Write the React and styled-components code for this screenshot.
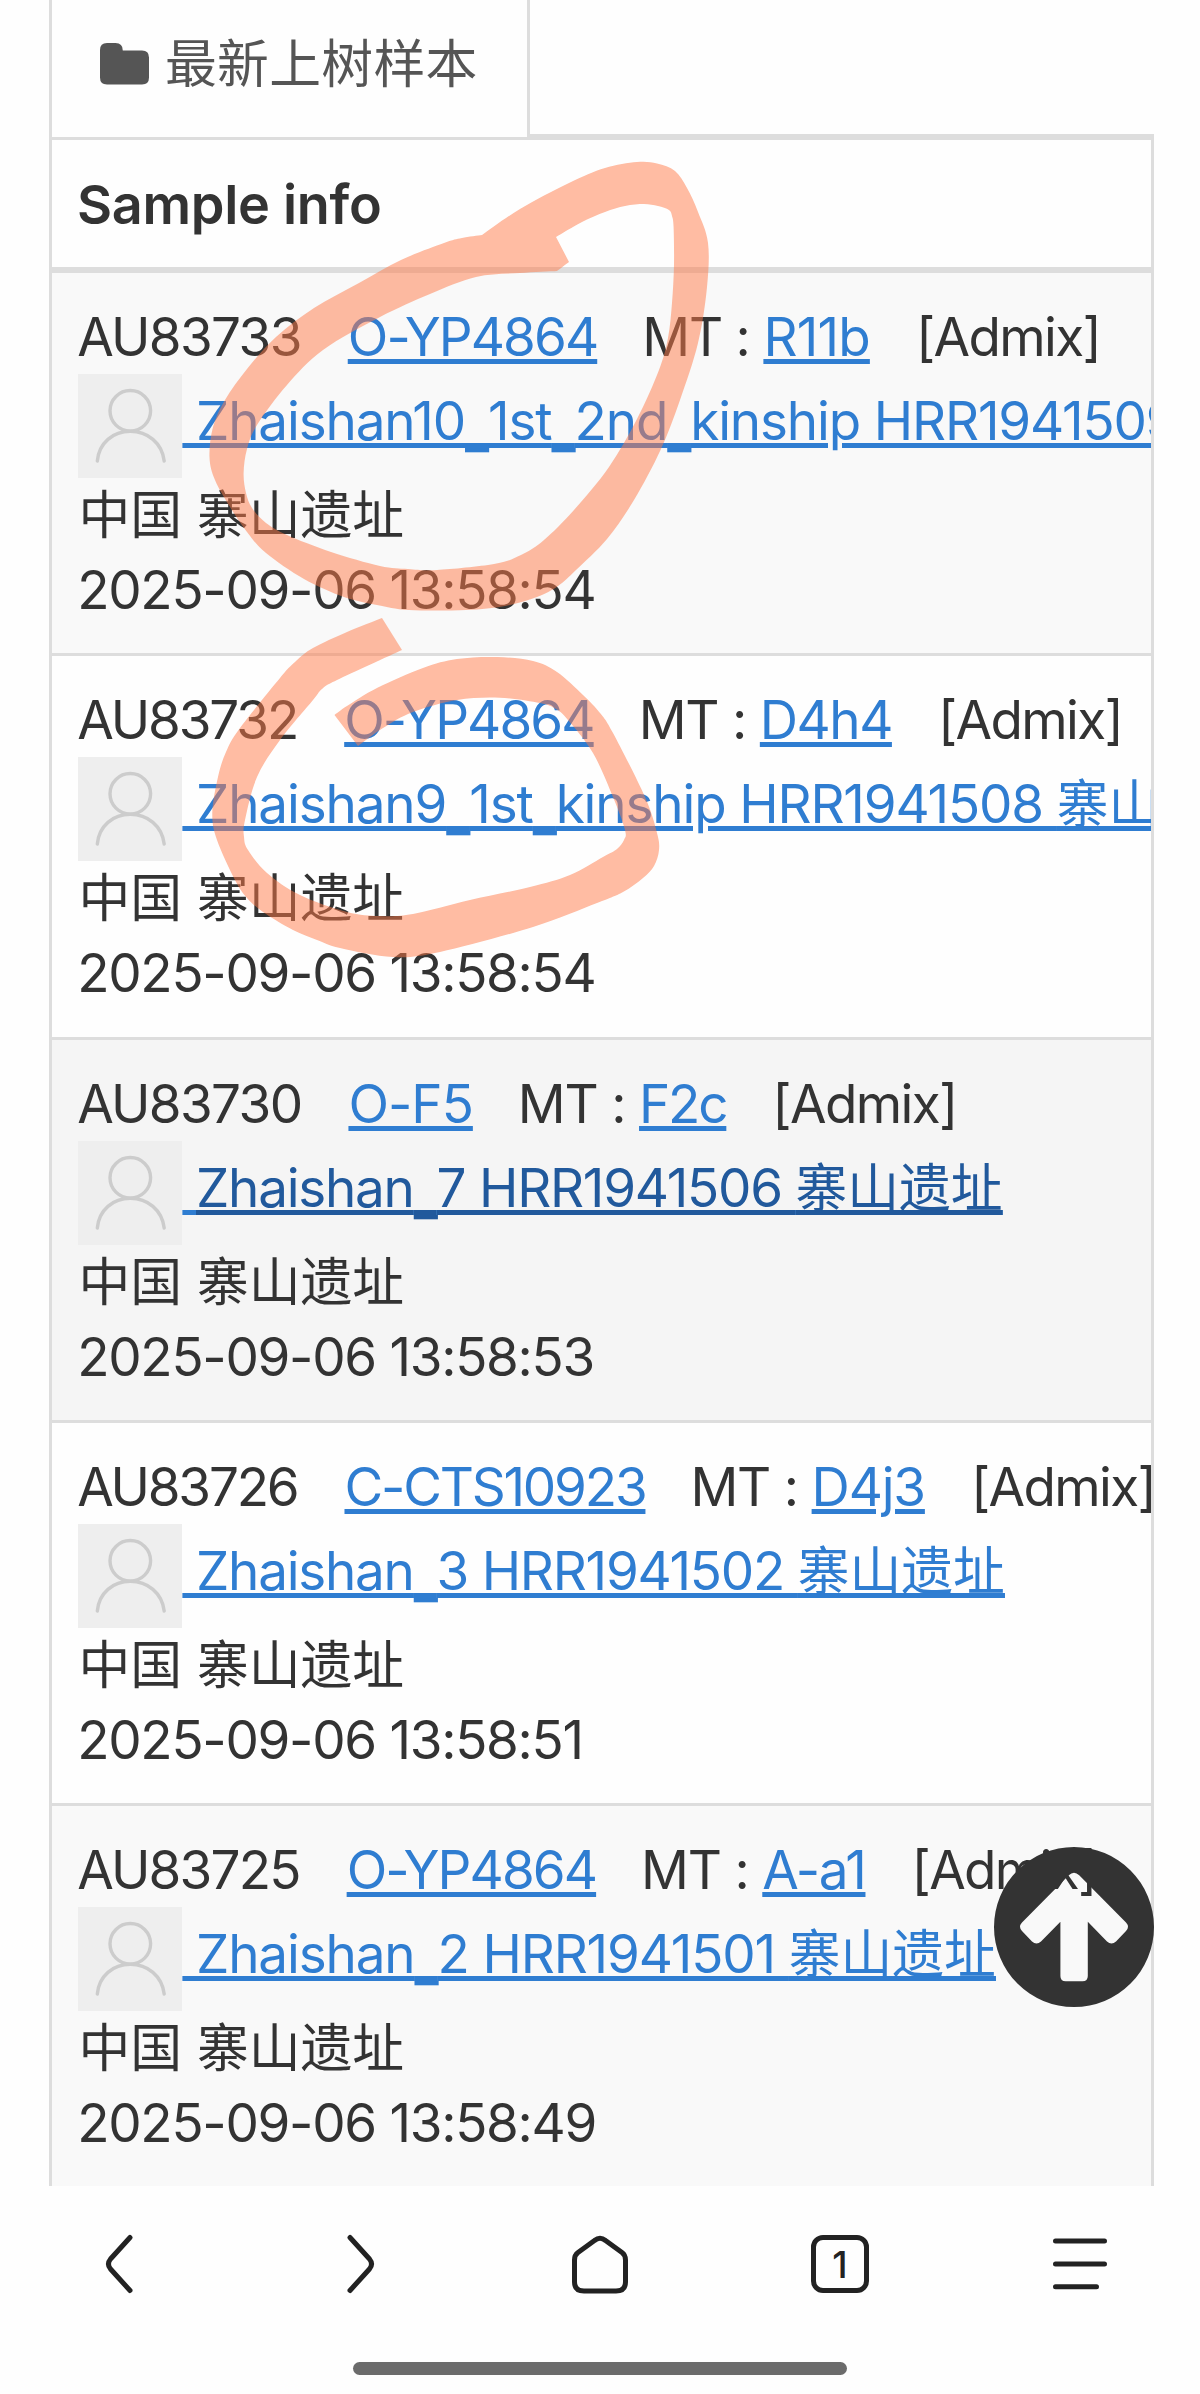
import React from "react";
import styled, { createGlobalStyle } from "styled-components";

const GlobalStyle = createGlobalStyle`
  * {
    box-sizing: border-box;
  }
  body {
    margin: 0;
    background: #fefefe;
    color: #333;
    font-family: "Inter", "Noto Sans CJK SC", sans-serif;
    font-size: 53px;
  }
`;

const Page = styled.div`
  position: relative;
  width: 1200px;
  height: 2394px;
  display: flex;
  flex-direction: column;
  overflow: hidden;
`;

const Content = styled.main`
  height: 2186px;
  padding: 0 46px 0 49px;
  overflow: hidden;
`;

const TabBar = styled.div`
  display: flex;
  height: 137px;
  border-bottom: 3px solid #ddd;
`;

const Tab = styled.div`
  display: flex;
  align-items: center;
  gap: 15px;
  width: 481px;
  height: 137px;
  padding: 0 0 9px 48px;
  border: solid #ddd;
  border-width: 0 3px;
  background: #fefefe;
  color: #555;
  font-size: 51.8px;
  line-height: 74px;
  letter-spacing: 0.3px;
  white-space: nowrap;
`;

const Table = styled.section`
  border: 3px solid #ddd;
  border-bottom: 0;
  overflow: hidden;
`;

const TableHead = styled.header`
  height: 133px;
  padding: 1px 0 0 25px;
  border-bottom: 6px solid #ddd;
  font-size: 54px;
  font-weight: 600;
  line-height: 127px;
  letter-spacing: -0.3px;
`;

const Sample = styled.article`
  height: 383.3px;
  padding: 28px 0 0 26.4px;
  border-bottom: 3px solid #ddd;
  background: ${({ $bg }) => $bg};
  white-space: pre;
`;

const Tags = styled.div`
  display: flex;
  height: 73px;
  margin-left: -1.2px;
  line-height: 73px;
`;

const Piece = styled.span`
  flex: none;
  letter-spacing: ${({ $track = -1.65 }) => $track}px;
  margin-right: ${({ $gap = 47 }) => $gap}px;
`;

const Link = styled.a`
  color: #2f7dd1;
  text-decoration: underline;
  text-decoration-thickness: 5px;
  text-underline-offset: 3px;
`;

const TagLink = styled(Link)`
  flex: none;
  letter-spacing: ${({ $track = -1.9 }) => $track}px;
  margin-right: ${({ $gap = 45 }) => $gap}px;
`;

const NameLine = styled.div`
  display: flex;
  height: 104px;
`;

const Picture = styled.svg`
  flex: none;
  width: 104px;
  height: 104px;
`;

const NameLink = styled(Link)`
  padding-top: 11px;
  line-height: 73px;
  letter-spacing: -1.3px;
`;

const NameText = styled.span`
  color: ${({ $active }) => ($active ? "#21599c" : "#2f7dd1")};
  letter-spacing: ${({ $track }) => $track}px;
  text-decoration: inherit;
`;

const Underscore = styled.span`
  line-height: 1;
  vertical-align: -8px;
  text-decoration-skip-ink: none;
`;

const Cjk = styled.span`
  font-size: 51.8px;
  letter-spacing: 0;
`;

const Place = styled.div`
  height: 75.2px;
  line-height: 74.6px;
`;

const Time = styled(Place)`
  margin-left: -1.2px;
  letter-spacing: -1.3px;
`;

const samples = [
  {
    id: "AU83733",
    y: "O-YP4864",
    mt: "R11b",
    mtTrack: -0.8,
    name: "Zhaishan10_1st_2nd_kinship HRR1941509 ",
    nameTrack: -1.15,
    time: "2025-09-06 13:58:54",
    bg: "#f9f9f9",
  },
  {
    id: "AU83732",
    idTrack: -2.1,
    y: "O-YP4864",
    mt: "D4h4",
    mtTrack: -1.5,
    name: "Zhaishan9_1st_kinship HRR1941508 ",
    nameTrack: -1.15,
    time: "2025-09-06 13:58:54",
    bg: "#fefefe",
  },
  {
    id: "AU83730",
    y: "O-F5",
    yTrack: -1,
    mt: "F2c",
    mtTrack: -2.2,
    name: "Zhaishan_7 HRR1941506 ",
    nameTrack: -1.25,
    time: "2025-09-06 13:58:53",
    bg: "#f5f5f5",
    active: true,
  },
  {
    id: "AU83726",
    idTrack: -2.2,
    y: "C-CTS10923",
    yTrack: -2.2,
    mt: "D4j3",
    mtTrack: -1.2,
    name: "Zhaishan_3 HRR1941502 ",
    nameTrack: -1.25,
    time: "2025-09-06 13:58:51",
    bg: "#fefefe",
  },
  {
    id: "AU83725",
    idTrack: -1.8,
    y: "O-YP4864",
    mt: "A-a1",
    mtTrack: -1.3,
    name: "Zhaishan_2 HRR1941501 ",
    nameTrack: -1.15,
    time: "2025-09-06 13:58:49",
    bg: "#f9f9f9",
  },
];

const place = "寨山遗址";

const Avatar = () => (
  <Picture viewBox="0 0 104 104">
    <rect width="104" height="104" fill="#eee" />
    <g fill="none" stroke="#ccc" strokeWidth="3.4" strokeLinecap="round">
      <circle cx="52.3" cy="36.8" r="20.3" />
      <path d="M19.3 87C21 69 35 57.3 52.3 57.3S84 69 86.2 87" />
    </g>
  </Picture>
);

const SampleRow = ({ sample }) => {
  const { id, idTrack, y, yTrack, mt, mtTrack, name, nameTrack, time, bg, active } = sample;

  return (
    <Sample $bg={bg}>
      <Tags>
        <Piece $track={idTrack}>{id}</Piece>
        <TagLink $track={yTrack}>{y}</TagLink>
        <Piece $track={-1.2} $gap={0}>
          {"MT : "}
        </Piece>
        <TagLink $track={mtTrack} $gap={46}>
          {mt}
        </TagLink>
        <Piece>[Admix]</Piece>
      </Tags>
      <NameLine>
        <Avatar />
        <NameLink>
          {" "}
          <NameText $active={active} $track={nameTrack}>
            {name.split("_").map((part, i) => (
              <React.Fragment key={i}>
                {i > 0 && <Underscore>_</Underscore>}
                {part}
              </React.Fragment>
            ))}
            <Cjk>{place}</Cjk>
          </NameText>
        </NameLink>
      </NameLine>
      <Place>
        <Cjk>中国</Cjk> <Cjk>{place}</Cjk>
      </Place>
      <Time>{time}</Time>
    </Sample>
  );
};

const UpButton = styled.svg`
  position: absolute;
  left: 994px;
  top: 1847px;
`;

const Marks = styled.svg`
  position: absolute;
  inset: 0;
  pointer-events: none;
`;

// Catmull-Rom through every point of an open run
const curve = (pts) =>
  pts
    .slice(1)
    .map((p, i) => {
      const a = pts[i - 1] || pts[i];
      const b = pts[i];
      const d = pts[i + 2] || p;
      return `C${b[0] + (p[0] - a[0]) / 6} ${b[1] + (p[1] - a[1]) / 6} ${
        p[0] - (d[0] - b[0]) / 6
      } ${p[1] - (d[1] - b[1]) / 6} ${p[0]} ${p[1]}`;
    })
    .join("");

// runs are joined by sharp corners
const shape = (...runs) =>
  `M${runs[0][0].join(" ")}` +
  runs.map((r, i) => (i ? `L${r[0].join(" ")}` : "") + curve(r)).join("") +
  "Z";

const firstOuter = [
  [482, 235], [520, 209], [569, 183], [605, 168], [637, 162], [657, 163.5],
  [675, 171], [687, 188], [698, 212], [708, 243], [707, 287], [698, 343],
  [680, 400], [661, 449], [634, 500], [607, 539], [576, 570], [558, 586],
  [537, 597], [505, 606], [466, 610], [409, 610], [377, 605], [344, 597],
  [304, 579], [266, 553], [247, 532], [230, 507], [215, 480], [209.5, 457],
  [213, 427], [225, 400], [247, 369], [276, 337], [314, 308], [359, 283],
  [401, 260], [444, 243], [462, 238], [482, 235],
];

const firstInner = [
  [557, 271], [520, 273], [476, 277], [430, 294], [380, 317], [323, 350],
  [287, 385], [257, 425], [247, 449], [243.6, 473], [246, 493], [252, 508],
  [266, 523], [287, 535], [331, 552], [380, 566], [408, 569], [437, 570],
  [494, 564], [521, 555], [544, 540], [574, 510], [609, 467], [637, 419],
  [659, 370], [668, 338], [672, 303], [674, 265], [673.6, 227], [672, 216],
  [669, 210], [658, 206], [644, 204], [625, 206], [605, 212], [582, 222],
  [556, 237],
];

const firstTail = [[569, 262], [557, 271]];

const secondOuter = [
  [382, 618], [347, 632], [313, 648], [296, 661], [280, 678], [240, 728],
  [226, 752], [218, 777], [212.3, 813], [217, 840], [235, 880], [247, 898],
  [263, 912], [293, 930], [317, 940], [340, 948], [393, 957], [440, 952],
  [533, 927], [597, 903], [623, 892], [643, 878], [654, 866], [659, 850],
  [657, 833], [645, 797], [613, 733], [600, 713], [583, 695], [557, 672],
  [533, 661], [497, 657], [457, 659], [423, 668], [377, 688], [347, 706],
  [334.5, 715],
];

const secondInner = [
  [358, 746], [383, 728], [413, 712], [457, 700], [500, 697.7], [540, 703],
  [556, 709], [568, 720], [593, 753], [613, 797], [625, 830], [624, 840],
  [617, 849], [603, 857], [570, 875], [530, 887], [470, 900], [413, 914],
  [380, 916], [347, 912], [300, 895], [267, 873], [248, 850], [244, 837],
  [245, 820], [257, 777], [280, 740], [313, 700], [322, 689], [337, 680],
  [402, 650],
];

const Toolbar = styled.nav`
  display: grid;
  grid-template-columns: repeat(5, 240px);
  justify-items: center;
  align-items: center;
  height: 156px;
`;

const Icon = styled.svg`
  width: 64px;
  height: 64px;
  fill: none;
  stroke: #222;
  stroke-width: 5px;
  stroke-linecap: round;
  stroke-linejoin: round;
`;

const TabCount = styled.div`
  display: flex;
  align-items: center;
  justify-content: center;
  width: 58px;
  height: 58px;
  border: 5px solid #222;
  border-radius: 12px;
  color: #222;
  font-size: 37px;
  font-weight: 500;
  line-height: 1;
`;

const HomeBar = styled.div`
  width: 494px;
  height: 13px;
  margin: 20px auto 0;
  border-radius: 6.5px;
  background: #6b6b6b;
`;

const App = () => {
  return (
    <Page>
      <GlobalStyle />
      <Content>
        <TabBar>
          <Tab>
            <svg width="50" height="42" viewBox="0 0 50 42">
              <path
                d="M0 7Q0 0 7 0H15.5Q22.8 0 22.8 7.5H42Q49 7.5 49 14.5V34.5Q49 41.5 42 41.5H7Q0 41.5 0 34.5Z"
                fill="#555"
              />
            </svg>
            最新上树样本
          </Tab>
        </TabBar>
        <Table>
          <TableHead>Sample info</TableHead>
          {samples.map((sample) => (
            <SampleRow key={sample.id} sample={sample} />
          ))}
        </Table>
      </Content>
      <Toolbar>
        <Icon viewBox="0 0 64 64">
          <path d="M42 5.5L22.5 27Q18.4 32 22.5 37L42 58.5" />
        </Icon>
        <Icon viewBox="0 0 64 64">
          <path d="M22 5.5L41.5 27Q45.6 32 41.5 37L22 58.5" />
        </Icon>
        <Icon viewBox="0 0 64 64">
          <path d="M26.5 8.5Q32 4 37.5 8.5L54 20.5Q57.5 23 57.5 28V50Q57.5 59 48 59H16Q6.5 59 6.5 50V28Q6.5 23 10 20.5Z" />
        </Icon>
        <TabCount>1</TabCount>
        <Icon viewBox="0 0 64 64">
          <path d="M7.5 9H56.5M7.5 32H56.5M7.5 54.7H48.5" />
        </Icon>
      </Toolbar>
      <HomeBar />
      <UpButton width="160" height="160" viewBox="0 0 160 160">
        <path
          fill="#333"
          fillRule="evenodd"
          d="M80 0A80 80 0 0 1 80 160A80 80 0 0 1 80 0ZM74.8 28.2L28 75.5Q24 79.8 28 84L38 94.5Q42.5 98.5 47 94.5L66.4 74.7V129Q66.4 134.3 71.7 134.3H88.5Q93.8 134.3 93.8 129V74.7L113 94.5Q117.5 98.5 122 94.5L132 84Q136 79.8 132 75.5L85.2 28.2Q80 23.2 74.8 28.2Z"
        />
      </UpButton>
      <Marks width="1200" height="2394" fill="#ff7947" fillOpacity="0.5">
        <path fillRule="evenodd" d={shape(firstOuter) + shape(firstInner, firstTail)} />
        <path d={shape(secondOuter, secondInner)} />
      </Marks>
    </Page>
  );
};

export default App;
